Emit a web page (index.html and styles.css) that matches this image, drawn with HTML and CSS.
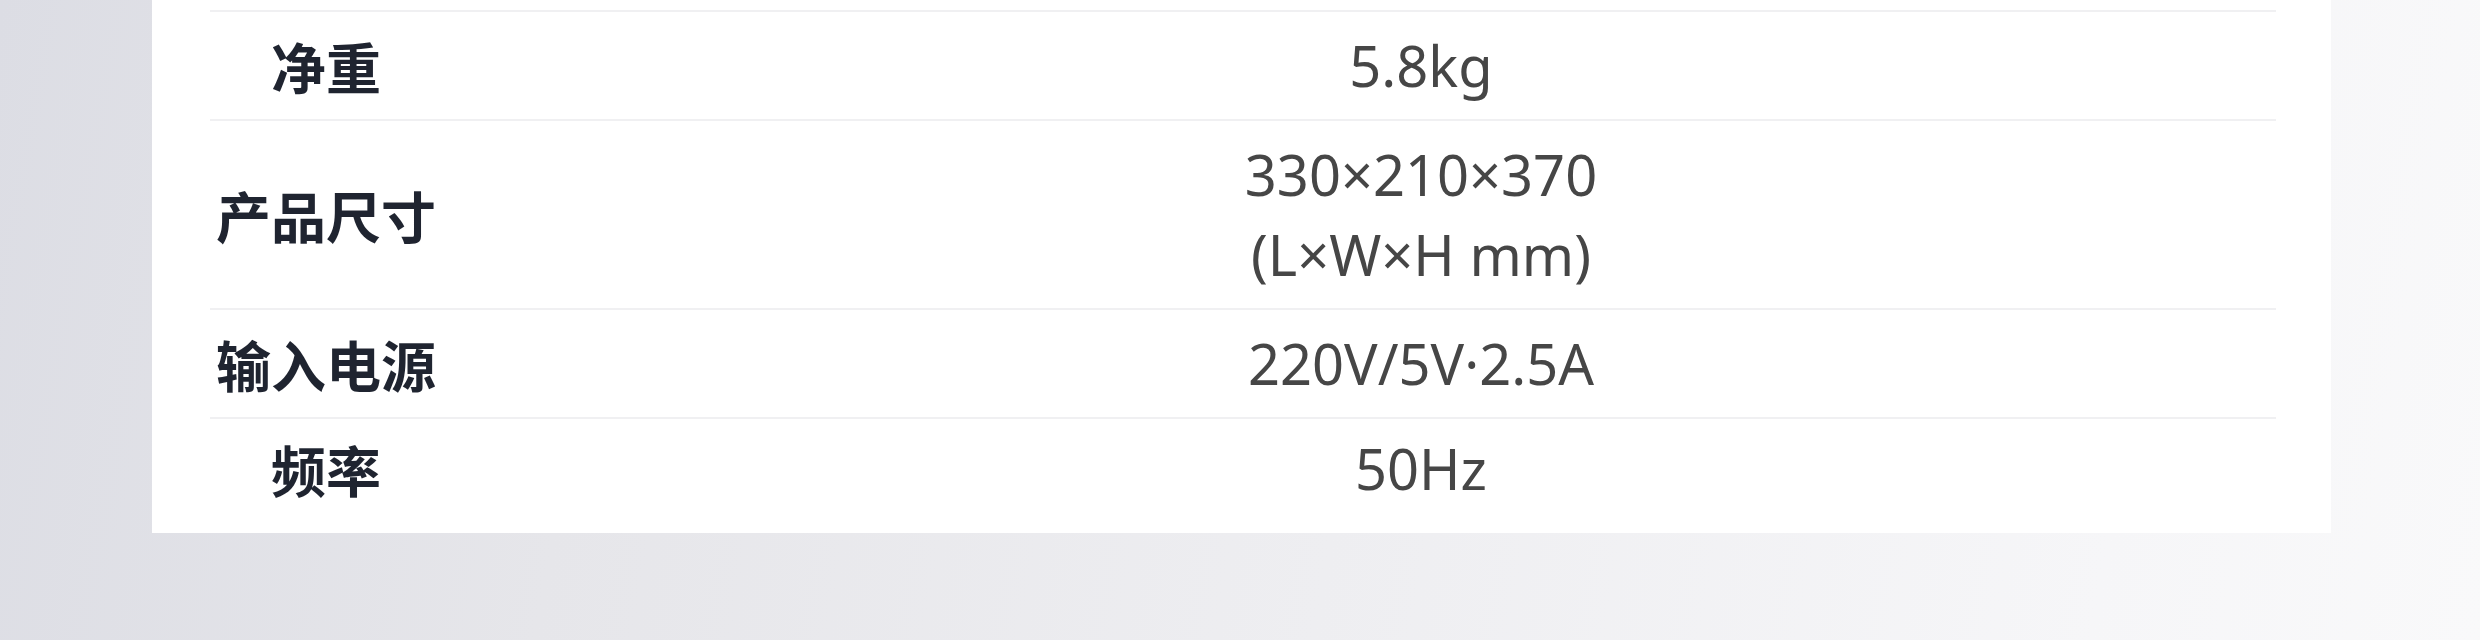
FILE: index.html
```html
<!DOCTYPE html>
<html lang="zh-CN">
<head>
  <meta charset="UTF-8" />
  <title>产品参数</title>
  <meta name="viewport" content="width=device-width, initial-scale=1" />
  <link rel="stylesheet" href="styles.css">
</head>
<body>

  <div class="page">
    <div class="card">
      <div class="specs">
        <div class="row">
          <div class="label">净重</div>
          <div class="value">5.8kg</div>
        </div>
        <div class="row">
          <div class="label">产品尺寸</div>
          <div class="value">330×210×370<br>(L×W×H mm)</div>
        </div>
        <div class="row">
          <div class="label">输入电源</div>
          <div class="value">220V/5V·2.5A</div>
        </div>
        <div class="row last">
          <div class="label">频率</div>
          <div class="value">50Hz</div>
        </div>
      </div>
    </div>
  </div>

</body>
</html>
```

FILE: styles.css
```css
:root {
  --line: #f0f0f2;
  --label: #1f2430;
  --value: #464646;
}

html, body {
  height: 100%;
}

body {
  margin: 0;
  overflow: hidden;
  font-family: "Noto Sans", "Noto Sans CJK SC", sans-serif;
  background: linear-gradient(100deg, #dcdde4 0%, #e6e6ea 25%, #eeeef1 55%, #f6f6f8 85%, #f9f9fa 100%);
}

.page {
  padding: 0 149px 0 152px;
}

.card {
  background: #ffffff;
  padding: 10px 55px 11px 58px;
}

.row {
  display: grid;
  grid-template-columns: 232px 1fr;
  align-items: center;
  border-top: 2px solid var(--line);
  padding: 13px 0 14px;
}

.row.last {
  padding-top: 9px;
}

.label {
  text-align: center;
  font-family: "Noto Sans CJK SC", sans-serif;
  font-weight: 700;
  font-size: 55px;
  line-height: 80px;
  color: var(--label);
}

.value {
  text-align: center;
  padding-left: 124px;
  font-size: 56px;
  line-height: 80px;
  color: var(--value);
}
```
